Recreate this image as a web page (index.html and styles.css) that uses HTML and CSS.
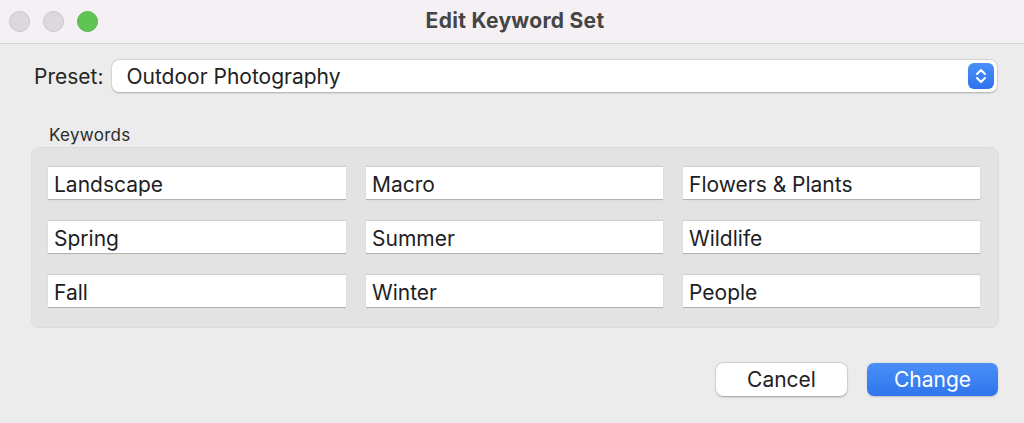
FILE: index.html
```html
<!DOCTYPE html>
<html>
<head>
<meta charset="utf-8">
<link rel="stylesheet" href="styles.css">
</head>
<body>
<div class="window">
  <div class="titlebar">
    <div class="lights">
      <span class="light gray"></span>
      <span class="light gray"></span>
      <span class="light green"></span>
    </div>
    <div class="title">Edit Keyword Set</div>
  </div>
  <div class="content">
    <div class="preset-row">
      <span class="preset-label">Preset:</span>
      <div class="popup">
        <span class="popup-text">Outdoor Photography</span>
        <span class="stepper">
          <svg width="14" height="20" viewBox="0 0 14 20"><path d="M3 8 L7 4 L11 8 M3 12 L7 16 L11 12" fill="none" stroke="#fff" stroke-width="2" stroke-linecap="round" stroke-linejoin="round"/></svg>
        </span>
      </div>
    </div>
    <div class="group-label">Keywords</div>
    <div class="group">
      <div class="field">Landscape</div>
      <div class="field">Macro</div>
      <div class="field">Flowers &amp; Plants</div>
      <div class="field">Spring</div>
      <div class="field">Summer</div>
      <div class="field">Wildlife</div>
      <div class="field">Fall</div>
      <div class="field">Winter</div>
      <div class="field">People</div>
    </div>
    <div class="buttons">
      <button class="btn cancel">Cancel</button>
      <button class="btn primary">Change</button>
    </div>
  </div>
</div>
</body>
</html>
```
FILE: styles.css
```css
* { box-sizing: border-box; }
html, body { margin: 0; padding: 0; }
body {
  width: 1024px;
  height: 423px;
  background: #ececec;
  font-family: "Inter", "Liberation Sans", sans-serif;
  color: #222;
  overflow: hidden;
}
.window { width: 1024px; height: 423px; display: flex; flex-direction: column; }
.titlebar {
  height: 44px;
  background: #f4f0f4;
  border-bottom: 1px solid #d6d3d6;
  display: flex;
  align-items: center;
  position: relative;
}
.lights { display: flex; gap: 13px; padding-left: 9px; position: relative; z-index: 1; }
.light {
  width: 21px; height: 21px; border-radius: 50%;
  display: block;
}
.light.gray { background: #dcd8dc; border: 1px solid #c9c5c9; }
.light.green { background: #5fc453; border: 1px solid #55b24a; }
.title {
  position: absolute; left: 0; right: 0; top: 0; bottom: 2px;
  display: flex; align-items: center; justify-content: center;
  font-weight: 700; font-size: 21px; color: #454545;
  letter-spacing: 0.3px;
  padding-left: 6px;
}
.content { padding: 16px 26px 0 31px; display: flex; flex-direction: column; }
.preset-row { display: flex; align-items: center; padding-left: 3px; }
.preset-label { font-size: 21px; color: #262626; margin-right: 9px; }
.popup {
  flex: 1;
  height: 32px;
  background: #fff;
  border-radius: 7px;
  box-shadow: 0 0.5px 2px rgba(0,0,0,0.25), 0 0 0 0.5px rgba(0,0,0,0.06);
  display: flex; align-items: center; justify-content: space-between;
  padding: 0 3px 0 14px;
  margin-right: 1px;
}
.popup-text { font-size: 21px; color: #222; }
.stepper {
  width: 26px; height: 26px; border-radius: 6px;
  background: linear-gradient(#4a8ff7, #2e74ec);
  display: flex; align-items: center; justify-content: center;
}
.group-label { font-size: 17px; letter-spacing: 0.3px; color: #2a2a2a; margin: 33px 0 2px 18px; }
.group {
  background: #e3e3e3;
  border-radius: 8px;
  border: 1px solid #dcdcdc;
  padding: 18px 17px 19px 16px;
  display: grid;
  grid-template-columns: 298px 297px 297px;
  column-gap: 20px;
  row-gap: 20px;
  margin-right: -1px;
}
.field {
  height: 34px;
  background: #fff;
  border-top: 1px solid #d2d2d2;
  border-bottom: 1px solid #b3b3b3;
  box-shadow: 0 0 0 0.5px #dadada;
  font-size: 21px;
  color: #1e1e1e;
  padding: 5px 0 0 6px;
  line-height: 26px;
}
.buttons { display: flex; justify-content: flex-end; gap: 20px; margin-top: 35px; }
.btn {
  width: 131px; height: 33px;
  border-radius: 7px;
  font-family: "Inter", "Liberation Sans", sans-serif;
  font-size: 21px;
  border: none;
  padding: 0;
}
.cancel { background: #fff; color: #222; box-shadow: 0 0.5px 2px rgba(0,0,0,0.3), 0 0 0 0.5px rgba(0,0,0,0.08); }
.primary { background: linear-gradient(#4a8ff8, #2f75ec); color: #fff; box-shadow: 0 0.5px 1.5px rgba(0,0,0,0.2); }
```
